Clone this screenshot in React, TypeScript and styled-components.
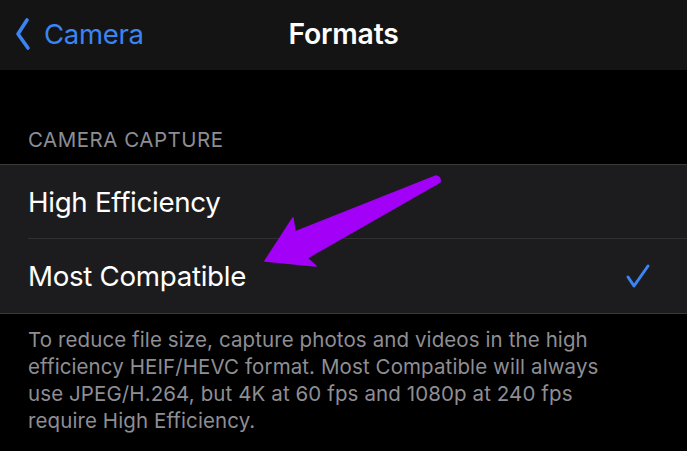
import React from "react";
import styled, { createGlobalStyle } from "styled-components";

const Global = createGlobalStyle`
  html, body { margin: 0; padding: 0; background: #000; }
  body { font-family: Inter, "Noto Sans", sans-serif; -webkit-font-smoothing: antialiased; }
`;

const Screen = styled.div`
  position: relative;
  width: 687px;
  height: 451px;
  overflow: hidden;
  background: #000;
`;

const NavBar = styled.header`
  height: 70px;
  background: #141414;
  display: grid;
  grid-template-columns: 1fr auto 1fr;
  align-items: center;
`;

const BackButton = styled.div`
  display: flex;
  align-items: center;
  gap: 13px;
  padding-left: 14px;
  color: #3b84f4;
  font-size: 27.5px;
  letter-spacing: -0.3px;
  padding-bottom: 2px;
`;

const Title = styled.h1`
  margin: 0;
  color: #fff;
  font-size: 28.3px;
  font-weight: 600;
  letter-spacing: -0.2px;
  padding-bottom: 2px;
`;

const SectionHeader = styled.div`
  height: 94px;
  display: flex;
  align-items: flex-end;
  padding: 0 28px 12px;
  box-sizing: border-box;
  color: #8d8d93;
  font-size: 20.5px;
  letter-spacing: 0.5px;
`;

const Group = styled.div`
  background: #1c1c1e;
  border-top: 1px solid #3a3a3c;
  border-bottom: 1px solid #3a3a3c;
`;

const Row = styled.div<{ $last?: boolean }>`
  height: 74px;
  margin-left: 28px;
  padding-right: 36px;
  display: flex;
  align-items: center;
  justify-content: space-between;
  border-bottom: ${(p) => (p.$last ? "none" : "1px solid #303032")};
  box-sizing: border-box;
  color: #fff;
  font-size: 27.7px;
  letter-spacing: -0.3px;
`;

const Footer = styled.p`
  margin: 0;
  padding: 12px 66px 0 28px;
  color: #8e8e93;
  font-size: 20.5px;
  line-height: 27px;
  letter-spacing: 0.1px;
`;

const Overlay = styled.svg`
  position: absolute;
  left: 0;
  top: 0;
  pointer-events: none;
`;

const Chevron = () => (
  <svg width="17" height="34" viewBox="0 0 17 34">
    <path d="M13 3 L4 17 L14 31" fill="none" stroke="#3b84f4" strokeWidth="3.6" strokeLinecap="round" strokeLinejoin="round" />
  </svg>
);

const Check = () => (
  <svg width="28" height="26" viewBox="0 0 28 26">
    <path d="M5 14 L11 23 L25 3" fill="none" stroke="#3b84f4" strokeWidth="3" strokeLinecap="round" strokeLinejoin="round" />
  </svg>
);

export default function App() {
  return (
    <Screen>
      <Global />
      <NavBar>
        <BackButton>
          <Chevron />
          <span>Camera</span>
        </BackButton>
        <Title>Formats</Title>
        <div />
      </NavBar>
      <SectionHeader>CAMERA CAPTURE</SectionHeader>
      <Group>
        <Row>High Efficiency</Row>
        <Row $last>
          <span>Most Compatible</span>
          <Check />
        </Row>
      </Group>
      <Footer>
        To reduce file size, capture photos and videos in the high efficiency HEIF/HEVC format. Most Compatible will always use JPEG/H.264, but 4K at 60 fps and 1080p at 240 fps require High Efficiency.
      </Footer>
      <Overlay width="687" height="451" viewBox="0 0 687 451">
        <path
          d="M436 176 Q441 177 440 182 L307 258 L316 266 L265 261 L293 218 L295 232 Z"
          fill="#a200f7"
          stroke="#a200f7"
          strokeWidth="1.5"
          strokeLinejoin="round"
        />
      </Overlay>
    </Screen>
  );
}
